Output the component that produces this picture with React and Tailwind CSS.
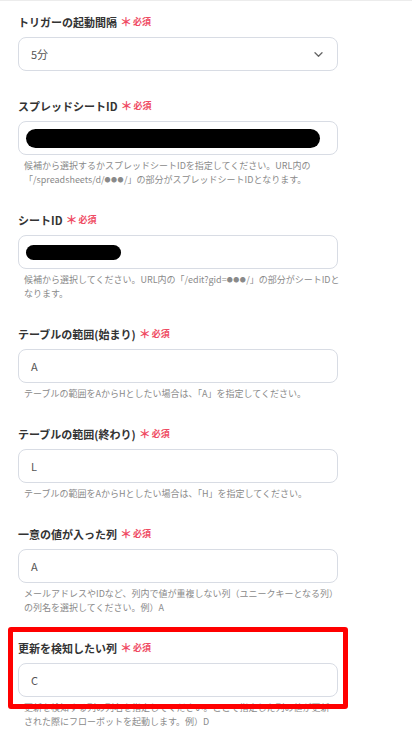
const dots = <span className="text-[6px] align-[1px] tracking-[0.5px]">●●●</span>;

const fields = [
  { label: 'トリガーの起動間隔', value: '5分', select: true },
  {
    label: 'スプレッドシートID',
    redact: 'w-[294px] h-[19px]',
    help: ['候補から選択するかスプレッドシートIDを指定してください。URL内の', <>「/spreadsheets/d/{dots}/」の部分がスプレッドシートIDとなります。</>],
  },
  {
    label: 'シートID',
    redact: 'w-[95px] h-[15px]',
    help: [<>候補から選択してください。URL内の「/edit?gid={dots}/」の部分がシートIDと</>, 'なります。'],
  },
  { label: 'テーブルの範囲(始まり)', value: 'A', help: ['テーブルの範囲をAからHとしたい場合は、「A」を指定してください。'] },
  { label: 'テーブルの範囲(終わり)', value: 'L', help: ['テーブルの範囲をAからHとしたい場合は、「H」を指定してください。'] },
  {
    label: '一意の値が入った列',
    value: 'A',
    help: ['メールアドレスやIDなど、列内で値が重複しない列（ユニークキーとなる列）', 'の列名を選択してください。例）A'],
  },
  {
    label: '更新を検知したい列',
    value: 'C',
    highlight: true,
    help: ['更新を検知する列の列名を指定してください。ここで指定した列の値が更新', 'された際にフローボットを起動します。例）D'],
  },
];

function Field({ f }) {
  return (
    <div className={`relative ${f.help ? 'mb-[25px]' : 'mb-[27px]'}`}>
      <div className="flex items-center h-[16px] leading-[16px]">
        <span className="text-[11px] font-bold text-[#333]">{f.label}</span>
        <span className="ml-[3px] mr-[1px] text-[12px] font-bold text-[#ef4b63]">＊</span>
        <span className="text-[9px] font-bold text-[#ef4b63]">必須</span>
      </div>
      <div className="mt-[7px] h-[34px] w-[320px] rounded-[8px] border border-[#d8dce4] bg-white flex items-center px-[7px]">
        {f.redact ? (
          <div className={`rounded-full bg-black ${f.redact}`} />
        ) : (
          <span className="pl-[5px] text-[11px] text-[#555]">{f.value}</span>
        )}
        {f.select && (
          <svg className="ml-auto mr-[7px]" width="9" height="5" viewBox="0 0 9 5" fill="none">
            <path d="M1 0.8l3.5 3.4 3.5-3.4" stroke="#666" strokeWidth="1.3" strokeLinecap="round" strokeLinejoin="round" />
          </svg>
        )}
      </div>
      {f.help && (
        <p className="mt-[4px] pl-[6px] text-[9px] leading-[14px] text-[#8a8a8a] whitespace-nowrap">
          {f.help.map((line, i) => (
            <span key={i} className="block">{line}</span>
          ))}
        </p>
      )}
      {f.highlight && (
        <div className="absolute left-[-10px] top-[-13px] w-[340px] h-[82px] rounded-[3px] border-[5px] border-[#ff0000] pointer-events-none" />
      )}
    </div>
  );
}

export default function App() {
  return (
    <div className="w-[412px] h-[729px] overflow-hidden bg-white border-t border-[#ececec] font-['Noto_Sans_CJK_JP','Noto_Sans',sans-serif]">
      <div className="pt-[13px] pl-[18px]">
        {fields.map((f, i) => (
          <Field key={i} f={f} />
        ))}
      </div>
    </div>
  );
}
